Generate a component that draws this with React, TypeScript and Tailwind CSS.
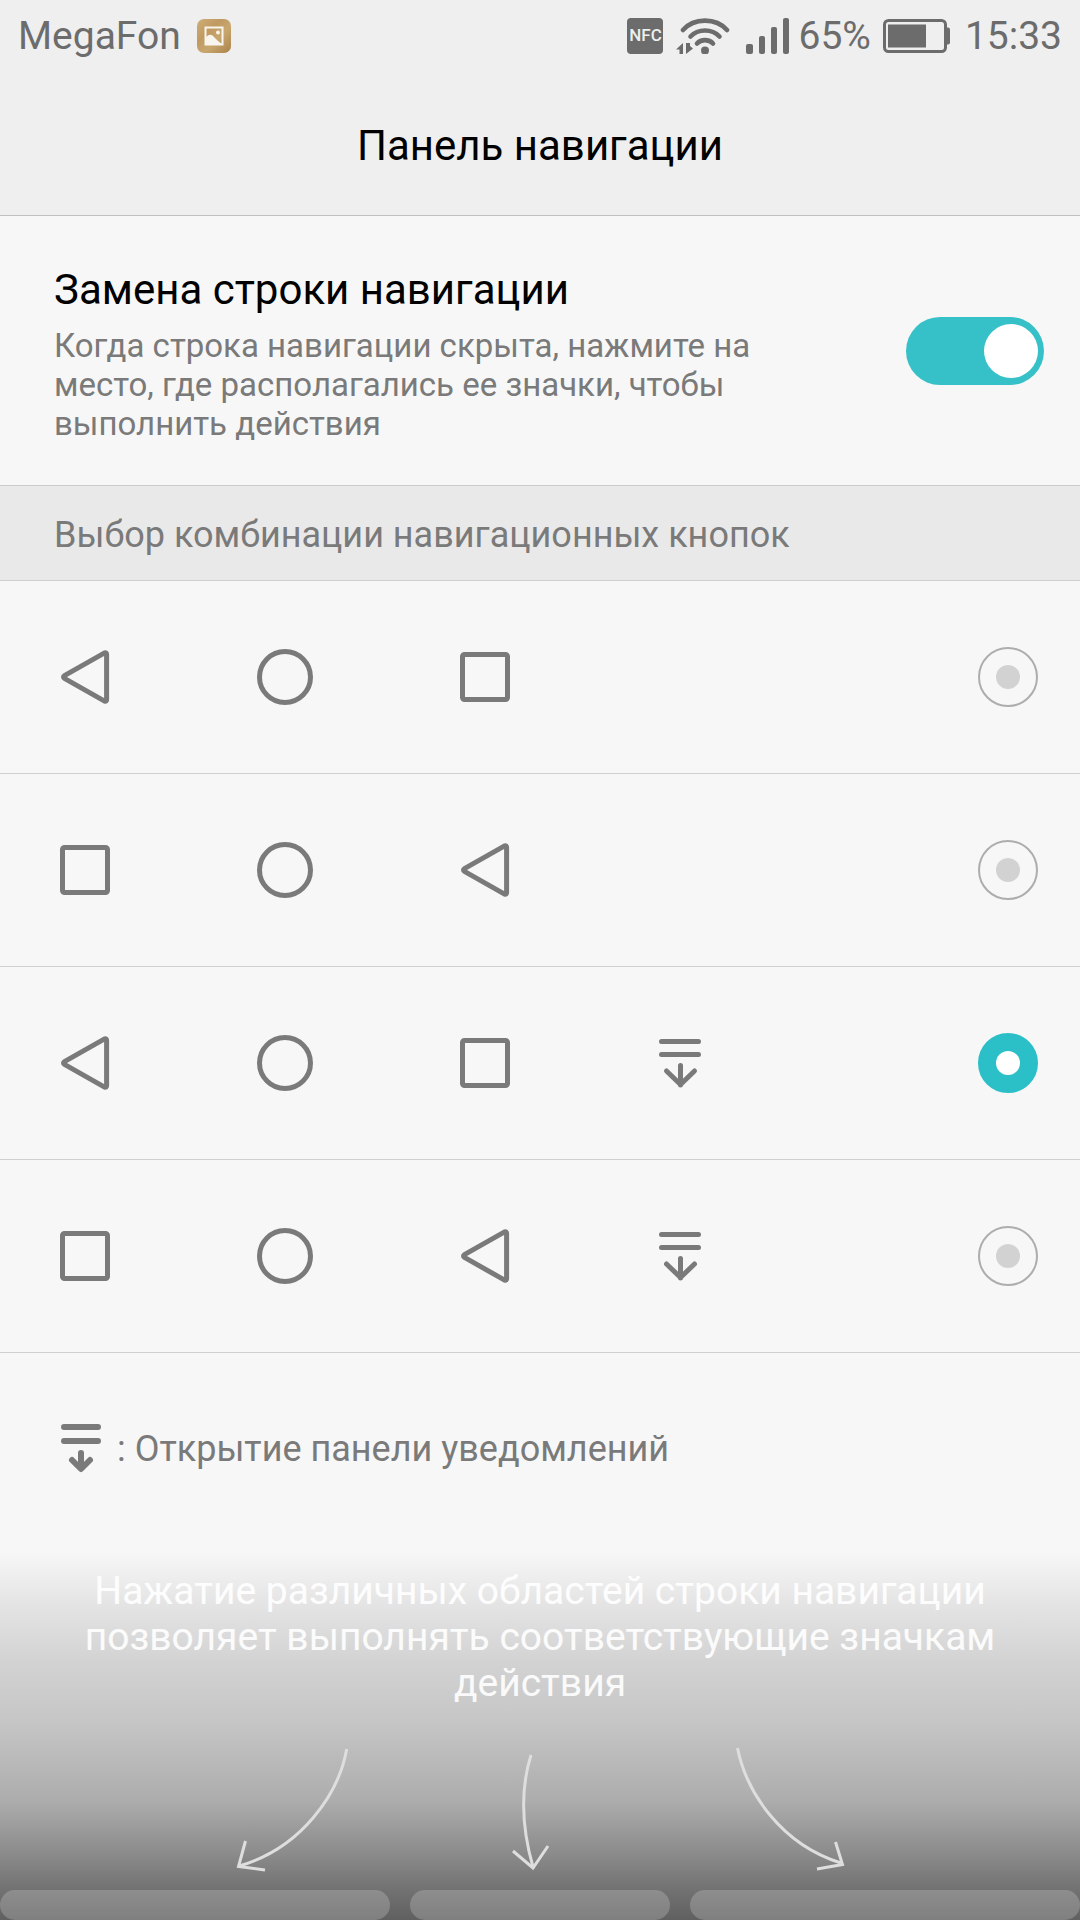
import { useState } from 'react'

type NavIcon = 'back' | 'home' | 'recent' | 'panel'

const combinations: { id: string; label: string; icons: NavIcon[] }[] = [
  { id: 'bhr', label: 'Назад, Домой, Недавние', icons: ['back', 'home', 'recent'] },
  { id: 'rhb', label: 'Недавние, Домой, Назад', icons: ['recent', 'home', 'back'] },
  { id: 'bhrp', label: 'Назад, Домой, Недавние, Уведомления', icons: ['back', 'home', 'recent', 'panel'] },
  { id: 'rhbp', label: 'Недавние, Домой, Назад, Уведомления', icons: ['recent', 'home', 'back', 'panel'] }
]

function NavGlyph({ icon }: { icon: NavIcon }) {
  return (
    <svg
      viewBox="0 0 56 56"
      className="size-14 shrink-0"
      fill="none"
      stroke="#7a7a7a"
      strokeWidth="5"
      strokeLinecap="round"
      strokeLinejoin="round"
      aria-hidden="true"
    >
      {icon === 'back' && (
        <path d="M47.6 3.9 L7.4 26.6 Q5.6 28 7.4 29.4 L47.6 52.1 Q49.6 52.6 49.6 50.6 V5.4 Q49.6 3.4 47.6 3.9 Z" />
      )}
      {icon === 'home' && <circle cx="28" cy="28" r="25.5" />}
      {icon === 'recent' && <rect x="5.5" y="5.5" width="45" height="45" rx="2" />}
      {icon === 'panel' && (
        <path d="M4.5 6.5 H41.5 M4.5 19.5 H41.5 M23.5 30.5 V50 M9.5 36 L23.5 49.5 L37.5 36" />
      )}
    </svg>
  )
}

function StatusBar() {
  return (
    <div className="flex h-[72px] items-center justify-between px-[18px] text-[39px] text-[#6c6c6c]">
      <div className="flex items-center gap-4">
        <span>MegaFon</span>
        <svg viewBox="0 0 34 34" className="size-[34px]" aria-hidden="true">
          <defs>
            <linearGradient id="gold" x1="0" y1="0" x2="1" y2="1">
              <stop offset="0" stopColor="#cfae78" />
              <stop offset="0.35" stopColor="#c09a61" />
              <stop offset="0.6" stopColor="#c8a76f" />
              <stop offset="1" stopColor="#aa8249" />
            </linearGradient>
          </defs>
          <rect width="34" height="34" rx="7" fill="url(#gold)" />
          <rect x="8.5" y="8.5" width="17" height="17" fill="none" stroke="#f8f5ee" strokeWidth="2" />
          <circle cx="21" cy="13.5" r="2" fill="#f8f5ee" />
          <path d="M9 18 Q14 13.5 17.5 18.5 Q20 21.5 25.5 25.5 H9 Z" fill="#f8f5ee" />
        </svg>
      </div>

      <div className="flex items-center">
        <span className="flex size-9 items-center justify-center rounded bg-[#6c6c6c] text-[17px] font-medium text-[#efefef]">
          NFC
        </span>
        <svg viewBox="0 0 54 36" className="ml-[13px] h-9 w-[54px]" fill="none" stroke="#6c6c6c" strokeWidth="4.6" strokeLinecap="round" aria-hidden="true">
          <path d="M7 12 C18 -0.5 40 -0.5 51 12" />
          <path d="M14.5 18.5 C22 10.5 36 10.5 43.5 18.5" />
          <path d="M21 25.5 C25 21 33 21 37 25.5" />
          <circle cx="29" cy="32.5" r="4" fill="#6c6c6c" stroke="none" />
          <path d="M0 31.5 L7 25 V36 H3.5 V31.5 Z M10 25 H14 V28 L17 30.5 L10 36 Z" fill="#6c6c6c" stroke="none" />
        </svg>
        <svg viewBox="0 0 44 36" className="ml-4 h-9 w-11" fill="#6c6c6c" aria-hidden="true">
          <rect x="0" y="26" width="7" height="10" rx="2" />
          <rect x="13" y="18" width="6" height="18" rx="2" />
          <rect x="25" y="9" width="6" height="27" rx="2" />
          <rect x="37" y="0" width="6" height="36" rx="2" />
        </svg>
        <span className="ml-2">65%</span>
        <svg viewBox="0 0 68 34" className="ml-3 h-[34px] w-[68px]" aria-hidden="true">
          <rect x="1.5" y="1.5" width="61" height="31" rx="4" fill="none" stroke="#6c6c6c" strokeWidth="3" />
          <rect x="5" y="5.5" width="38" height="23" fill="#6c6c6c" />
          <rect x="62" y="8.5" width="5" height="17" rx="2" fill="#6c6c6c" />
        </svg>
        <span className="ml-3.5">15:33</span>
      </div>
    </div>
  )
}

export default function App() {
  const [enabled, setEnabled] = useState(true)
  const [selected, setSelected] = useState('bhrp')

  return (
    <div className="flex min-h-screen flex-col bg-[#f7f7f7] font-['Roboto',sans-serif] text-[#7a7a7a]">
      {/* Header */}
      <header className="border-b border-[#c0c0c0] bg-[#efefef]">
        <StatusBar />
        <h1 className="flex h-[143px] items-center justify-center pt-1 text-[42px] text-black">Панель навигации</h1>
      </header>

      {/* Navigation bar toggle */}
      <section className="flex items-center justify-between border-b border-[#cccccc] py-[42px] pr-9 pl-[54px]">
        <div className="flex max-w-[740px] flex-col gap-2 pt-1">
          <label htmlFor="nav-switch" className="text-[42px] leading-[56px] text-black">
            Замена строки навигации
          </label>
          <p id="nav-hint" className="text-[33px] leading-[39px]">
            Когда строка навигации скрыта, нажмите на место, где располагались ее значки, чтобы выполнить действия
          </p>
        </div>
        <input
          id="nav-switch"
          type="checkbox"
          role="switch"
          aria-describedby="nav-hint"
          checked={enabled}
          onChange={(e) => setEnabled(e.target.checked)}
          className="flex h-[68px] w-[138px] shrink-0 appearance-none items-center rounded-full bg-[#c4c4c4] px-[6px] before:size-[54px] before:rounded-full before:bg-white checked:justify-end checked:bg-[#36c0c7]"
        />
      </section>

      {/* Button combinations */}
      <h2 className="flex h-[95px] items-center border-b border-[#d0d0d0] bg-[#e9e9e9] px-[54px] pt-1 text-[36px]">
        Выбор комбинации навигационных кнопок
      </h2>
      <div>
        {combinations.map((combo) => (
          <label
            key={combo.id}
            className="flex h-[193px] items-center justify-between border-b border-[#d0d0d0] pr-[42px] pl-[57px]"
          >
            <span className="flex gap-36">
              {combo.icons.map((icon) => (
                <NavGlyph key={icon} icon={icon} />
              ))}
            </span>
            <input
              type="radio"
              name="combination"
              aria-label={combo.label}
              checked={selected === combo.id}
              onChange={() => setSelected(combo.id)}
              className="grid size-[60px] shrink-0 appearance-none place-content-center rounded-full border-2 border-[#adadad] before:size-6 before:rounded-full before:bg-[#d2d2d2] checked:border-[#2bbfc8] checked:bg-[#2bbfc8] checked:before:bg-white"
            />
          </label>
        ))}
      </div>

      {/* Legend */}
      <div className="flex h-[191px] items-center gap-4 pl-[61px] text-[36px]">
        <svg viewBox="0 0 40 50" className="h-[50px] w-10" fill="none" stroke="#7a7a7a" strokeWidth="6" strokeLinecap="round" strokeLinejoin="round" aria-hidden="true">
          <path d="M3 3 H37 M3 17 H37" />
          <path d="M20 29 V44 M11 36 L20 45 L29 36" />
        </svg>
        <p>: Открытие панели уведомлений</p>
      </div>

      {/* Tap areas hint */}
      <footer className="flex flex-1 flex-col justify-between bg-[linear-gradient(to_bottom,#f7f7f7_2%,#e4e4e4_16%,#d3d3d3_31%,#c6c6c6_47%,#adadad_68%,#8c8c8c_82%,#747474_91%,#606060_100%)] pt-6">
        <p className="px-16 text-center text-[39px] leading-[46px] text-white/90">
          Нажатие различных областей строки навигации позволяет выполнять соответствующие значкам действия
        </p>
        <div>
          <div className="flex justify-between px-[234px] pb-[17px]">
            <svg viewBox="0 0 116 126" className="h-[126px] w-[116px]" fill="none" stroke="#dedede" strokeWidth="3" aria-hidden="true">
              <path d="M112.7 2 C105 46 68 101 5 119" />
              <path d="M11.5 94 L4.5 119.5 L31 123" />
            </svg>
            <svg viewBox="0 0 70 126" className="h-[126px] w-[70px]" fill="none" stroke="#dedede" strokeWidth="3" aria-hidden="true">
              <path d="M24 8 C14 40 14 78 26 120" />
              <path d="M6 104 L26 121 L41 99" />
            </svg>
            <svg viewBox="0 0 112 126" className="h-[126px] w-[112px]" fill="none" stroke="#dedede" strokeWidth="3" aria-hidden="true">
              <path d="M3.5 1 C12 44 46 97 107 116" />
              <path d="M101.5 95 L108.5 117.5 L83 122" />
            </svg>
          </div>
          <div className="flex h-[30px] gap-5">
            <div className="flex-3 rounded-full bg-white/20" />
            <div className="flex-2 rounded-full bg-white/20" />
            <div className="flex-3 rounded-full bg-white/20" />
          </div>
        </div>
      </footer>
    </div>
  )
}
